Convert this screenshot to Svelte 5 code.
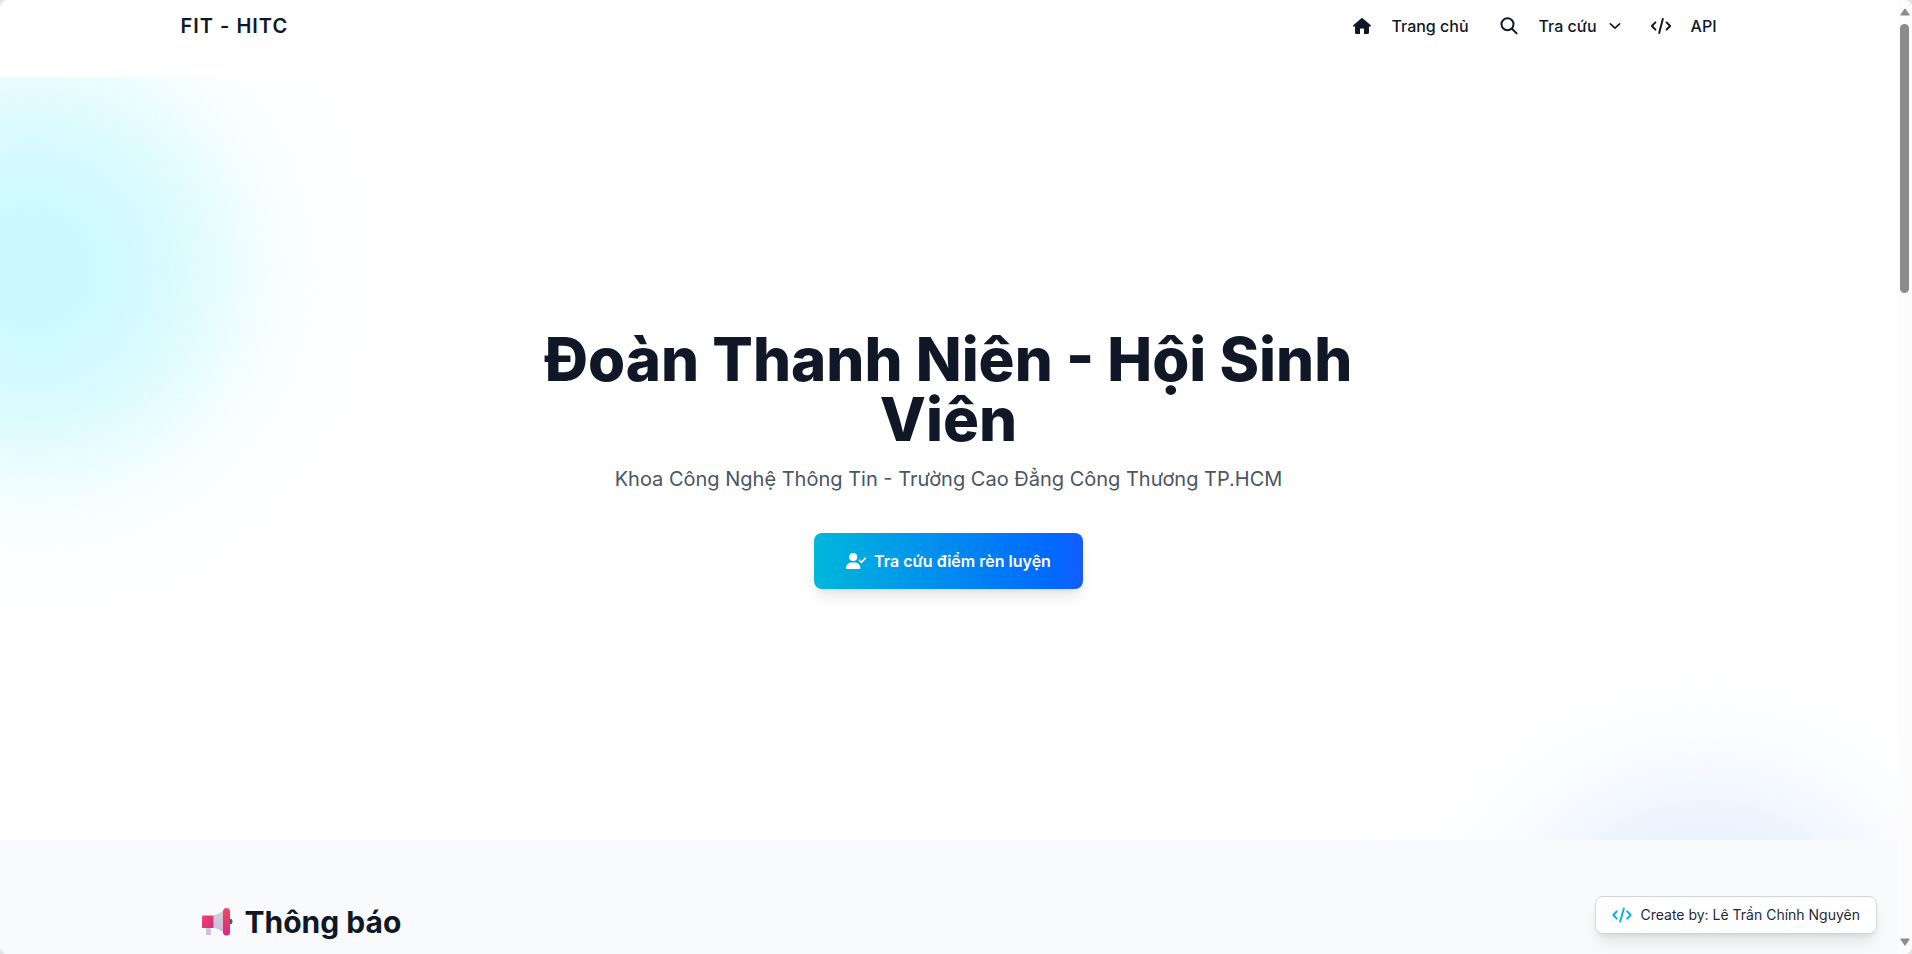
<script>
    let menuOpen = false; // dropdown "Tra cứu"
    let thumbRatio = 0.297; // visible share of the page
</script>

<div class="window">
    <div class="viewport">
        <header>
            <nav class="container">
                <a class="brand" href="#home">FIT - HITC</a>
                <div class="links">
                    <a href="#home">
                        <svg viewBox="0 0 20 20" width="20" height="20" fill="currentColor">
                            <path d="M10 1.8 1.2 9.2c-.5.5-.2 1.3.5 1.3H3v6.3c0 .7.5 1.2 1.2 1.2H8v-4.8c0-.4.3-.7.7-.7h2.6c.4 0 .7.3.7.7V18h3.8c.7 0 1.2-.5 1.2-1.2v-6.3h1.3c.7 0 1-.8.5-1.3L10 1.8z" />
                        </svg>
                        <span>Trang chủ</span>
                    </a>
                    <button class:open={menuOpen} on:click={() => (menuOpen = !menuOpen)}>
                        <svg viewBox="0 0 20 20" width="20" height="20" fill="none" stroke="currentColor" stroke-width="2" stroke-linecap="round">
                            <circle cx="8.5" cy="8.3" r="6" />
                            <path d="m13 12.8 4.6 4.6" />
                        </svg>
                        <span>Tra cứu</span>
                        <svg class="chevron" viewBox="0 0 12 12" width="12" height="12" fill="none" stroke="currentColor" stroke-width="1.6" stroke-linecap="round" stroke-linejoin="round">
                            <path d="m1.4 3.8 4.6 4.4 4.6-4.4" />
                        </svg>
                    </button>
                    <a href="#api">
                        <svg viewBox="0 0 20 16" width="20" height="16" fill="none" stroke="currentColor" stroke-width="2" stroke-linecap="round" stroke-linejoin="round">
                            <path d="M4.4 4.4.9 8l3.5 3.6M15.6 4.4 19.1 8l-3.5 3.6M11.8 1 8.2 15" />
                        </svg>
                        <span>API</span>
                    </a>
                </div>
            </nav>
        </header>

        <main>
            <section class="hero">
                <div class="blob cyan"></div>
                <div class="blob blue"></div>
                <div class="hero-content">
                    <h1>Đoàn Thanh Niên - Hội Sinh Viên</h1>
                    <p>Khoa Công Nghệ Thông Tin - Trường Cao Đẳng Công Thương TP.HCM</p>
                    <a class="cta" href="#lookup">
                        <svg viewBox="0 0 20 16" width="20" height="16" fill="currentColor">
                            <circle cx="7.2" cy="4" r="4" />
                            <path d="M5.6 9.5h3.2c3 0 5.6 2.4 5.6 5.5 0 .6-.4 1-1 1H1c-.6 0-1-.4-1-1 0-3.1 2.6-5.5 5.6-5.5z" />
                            <path d="m13.4 7.3 2.1 2.1 4-4.3" fill="none" stroke="currentColor" stroke-width="1.6" stroke-linecap="round" stroke-linejoin="round" />
                        </svg>
                        Tra cứu điểm rèn luyện
                    </a>
                </div>
            </section>

            <section class="notices">
                <div class="container">
                    <h2>
                        <svg viewBox="0 0 36 32" width="36" height="32" aria-hidden="true">
                            <defs>
                                <linearGradient id="cone" x1="0" y1="0" x2="0" y2="1">
                                    <stop offset="0" stop-color="#d6d0d3" />
                                    <stop offset="1" stop-color="#c8b8e4" />
                                </linearGradient>
                                <linearGradient id="box" x1="0" y1="0" x2="1" y2="1">
                                    <stop offset="0" stop-color="#f7416b" />
                                    <stop offset="1" stop-color="#c92e7c" />
                                </linearGradient>
                                <linearGradient id="rim" x1="0" y1="0" x2="0" y2="1">
                                    <stop offset="0" stop-color="#ee4866" />
                                    <stop offset="1" stop-color="#d52b78" />
                                </linearGradient>
                            </defs>
                            <rect x="5" y="20" width="5" height="9" rx="1" fill="url(#cone)" />
                            <circle cx="28.5" cy="15.5" r="3" fill="#5f5361" />
                            <path d="M12 9.5C17 8.8 21 6 24 3v25C21 25 17 22.5 12 21.8z" fill="url(#cone)" />
                            <rect x="1" y="9.5" width="11.5" height="12.5" rx="1" fill="url(#box)" />
                            <rect x="22" y="2" width="7" height="27.5" rx="3.5" fill="url(#rim)" />
                        </svg>
                        Thông báo
                    </h2>
                </div>
            </section>
        </main>

        <a class="credit" href="#author">
            <svg viewBox="0 0 20 16" width="20" height="16" fill="none" stroke="currentColor" stroke-width="2" stroke-linecap="round" stroke-linejoin="round">
                <path d="M4.8 4.4 1.4 8l3.4 3.6M15.2 4.4 18.6 8l-3.4 3.6M11.8 1.4 8.2 14.6" />
            </svg>
            <span>Create by: Lê Trần Chính Nguyên</span>
        </a>
    </div>

    <div class="scrollbar" aria-hidden="true">
        <svg viewBox="0 0 10 8" width="10" height="8"><path d="M4.5.8Q5 .2 5.5.8L9.5 6.5V7.500H.5V6.500z" /></svg>
        <div class="track">
            <div class="thumb" style="height: {thumbRatio * 100}%"></div>
        </div>
        <svg viewBox="0 0 10 8" width="10" height="8"><path d="M4.5 7.2Q5 7.8 5.5 7.2L9.5 1.5V.5H.5V1.5z" /></svg>
    </div>
</div>

<style>
    :global(body) {
        background: #e3e3e3;
        font-family: Inter, "Noto Sans", sans-serif;
        color: #101828;
    }

    .window {
        display: flex;
        height: 100vh;
        overflow: hidden;
        border-radius: 8px;
        background: white;
    }

    .viewport {
        position: relative;
        flex: 1;
        min-width: 0;
        overflow: hidden;
    }

    .container {
        max-width: 1536px;
        margin: 0 auto;
    }

    a {
        color: inherit;
        text-decoration: none;
    }

    /* Navigation */
    header {
        height: 77px;
    }

    nav {
        display: flex;
        align-items: center;
        justify-content: space-between;
        height: 52px;
    }

    .brand {
        font-size: 20px;
        line-height: 28px;
        font-weight: 600;
        letter-spacing: 0.05em;
    }

    .links {
        display: flex;
        align-items: center;
        gap: 30px;
        font-size: 16px;
        font-weight: 500;
        line-height: 24px;
    }

    .links a,
    .links button {
        display: flex;
        align-items: center;
        gap: 20px;
    }

    .links button {
        padding: 0;
        border: none;
        background: none;
        color: inherit;
        font: inherit;
        cursor: pointer;
    }

    .links .chevron {
        margin-left: -8px;
    }

    .open .chevron {
        transform: rotate(180deg);
    }

    /* Hero */
    .hero {
        position: relative;
        display: flex;
        align-items: center;
        justify-content: center;
        height: 80vh;
        overflow: hidden;
    }

    .blob {
        position: absolute;
        width: 384px;
        height: 384px;
        border-radius: 50%;
        filter: blur(72px);
    }

    .cyan {
        top: 0;
        left: -160px;
        background: #cbf9fe;
    }

    .blue {
        right: 0;
        bottom: -340px;
        background: #deebff;
    }

    .hero-content {
        position: relative;
        max-width: 896px;
        text-align: center;
    }

    h1 {
        margin: 0 0 16px;
        font-size: 60px;
        line-height: 60px;
        font-weight: 800;
    }

    p {
        margin: 0 0 40px;
        font-size: 20px;
        line-height: 28px;
        color: #4a5565;
    }

    .cta {
        display: inline-flex;
        align-items: center;
        gap: 8px;
        padding: 16px 32px;
        border-radius: 8px;
        background: linear-gradient(to right, #00b8db, #0069ff 88%, #155dfc);
        box-shadow: 0 10px 15px -3px rgba(0, 0, 0, 0.1), 0 4px 6px -4px rgba(0, 0, 0, 0.1);
        color: white;
        font-size: 16px;
        line-height: 24px;
        font-weight: 600;
    }

    /* Notices */
    .notices {
        padding: 64px 0;
        background: #f9fafb;
    }

    h2 {
        display: flex;
        align-items: center;
        gap: 8px;
        margin: 0;
        padding: 0 20px;
        font-size: 30px;
        line-height: 36px;
        font-weight: 700;
    }

    /* Floating credit */
    .credit {
        position: absolute;
        right: 20px;
        bottom: 20px;
        display: flex;
        align-items: center;
        gap: 8px;
        padding: 8px 16px;
        border: 1px solid #d1d5dc;
        border-radius: 8px;
        background: white;
        box-shadow: 0 10px 15px -3px rgba(0, 0, 0, 0.1), 0 4px 6px -4px rgba(0, 0, 0, 0.1);
        color: #1e2939;
        font-size: 14px;
        line-height: 20px;
    }

    .credit svg {
        color: #00b8db;
    }

    /* Scrollbar */
    .scrollbar {
        display: flex;
        flex-direction: column;
        align-items: center;
        gap: 8px;
        width: 15px;
        padding: 8px 0;
        box-sizing: border-box;
        background: #fcfcfc;
        fill: #8b8b8b;
    }

    .track {
        flex: 1;
    }

    .thumb {
        width: 9px;
        border-radius: 5px;
        background: #8b8b8b;
    }
</style>
